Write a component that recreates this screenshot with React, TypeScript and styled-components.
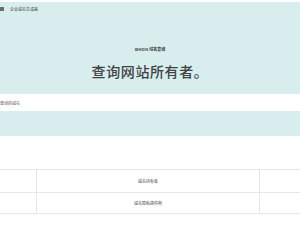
import React from "react";
import styled, { createGlobalStyle } from "styled-components";

const GlobalStyle = createGlobalStyle`
  body {
    margin: 0;
    background: #ffffff;
    font-family: "Noto Sans CJK SC", "Noto Sans", sans-serif;
    color: #333;
  }
`;

const Page = styled.div`
  width: 300px;
  height: 225px;
  overflow: hidden;
  padding-top: 2px;
`;

const Hero = styled.section`
  background: #d8eded;
  height: 92px;
  display: flex;
  flex-direction: column;
`;

const Nav = styled.nav`
  display: flex;
  align-items: center;
  gap: 6px;
  height: 8px;
  margin-top: 3px;
`;

const Logo = styled.span`
  width: 4px;
  height: 4px;
  background: #6a6f73;
`;

const NavLink = styled.span`
  font-size: 4px;
  line-height: 4px;
  color: #444;
`;

const HeroBody = styled.div`
  display: flex;
  flex-direction: column;
  align-items: center;
  margin-top: 34px;
`;

const Eyebrow = styled.div`
  font-size: 4px;
  line-height: 5px;
  font-weight: 700;
  color: #3c4146;
`;

const Title = styled.h1`
  margin: 11px 0 0;
  font-size: 14px;
  line-height: 17px;
  font-weight: 500;
  font-family: "Noto Sans CJK SC", serif;
  color: #3f4245;
  letter-spacing: 0.6px;
`;

const SearchRow = styled.div`
  height: 17px;
  background: #fff;
  display: flex;
  align-items: center;
`;

const Placeholder = styled.span`
  font-size: 4px;
  color: #555;
`;

const Band = styled.div`
  height: 25px;
  background: #d8eded;
`;

const Table = styled.div`
  margin-top: 33px;
  display: grid;
  grid-template-columns: 37px 223px 60px;
  width: 320px;
  border-top: 1px solid #e3e6ea;
`;

const Cell = styled.div<{ $h: number }>`
  height: ${(p) => p.$h}px;
  border-right: 1px solid #e3e6ea;
  border-bottom: 1px solid #e3e6ea;
  display: flex;
  align-items: center;
  justify-content: center;
  font-size: 4px;
  color: #444;
`;

const rows = [
  { label: "域名持有者", h: 22 },
  { label: "域名隐私提供商", h: 20 },
];

export default function App() {
  return (
    <Page>
      <GlobalStyle />
      <Hero>
        <Nav>
          <Logo />
          <NavLink>企业域名生成器</NavLink>
        </Nav>
        <HeroBody>
          <Eyebrow>WHOIS 域名查询</Eyebrow>
          <Title>查询网站所有者。</Title>
        </HeroBody>
      </Hero>
      <SearchRow>
        <Placeholder>查询的域名</Placeholder>
      </SearchRow>
      <Band />
      <Table>
        {rows.map((r) => (
          <React.Fragment key={r.label}>
            <Cell $h={r.h} />
            <Cell $h={r.h}>{r.label}</Cell>
            <Cell $h={r.h} />
          </React.Fragment>
        ))}
      </Table>
    </Page>
  );
}
